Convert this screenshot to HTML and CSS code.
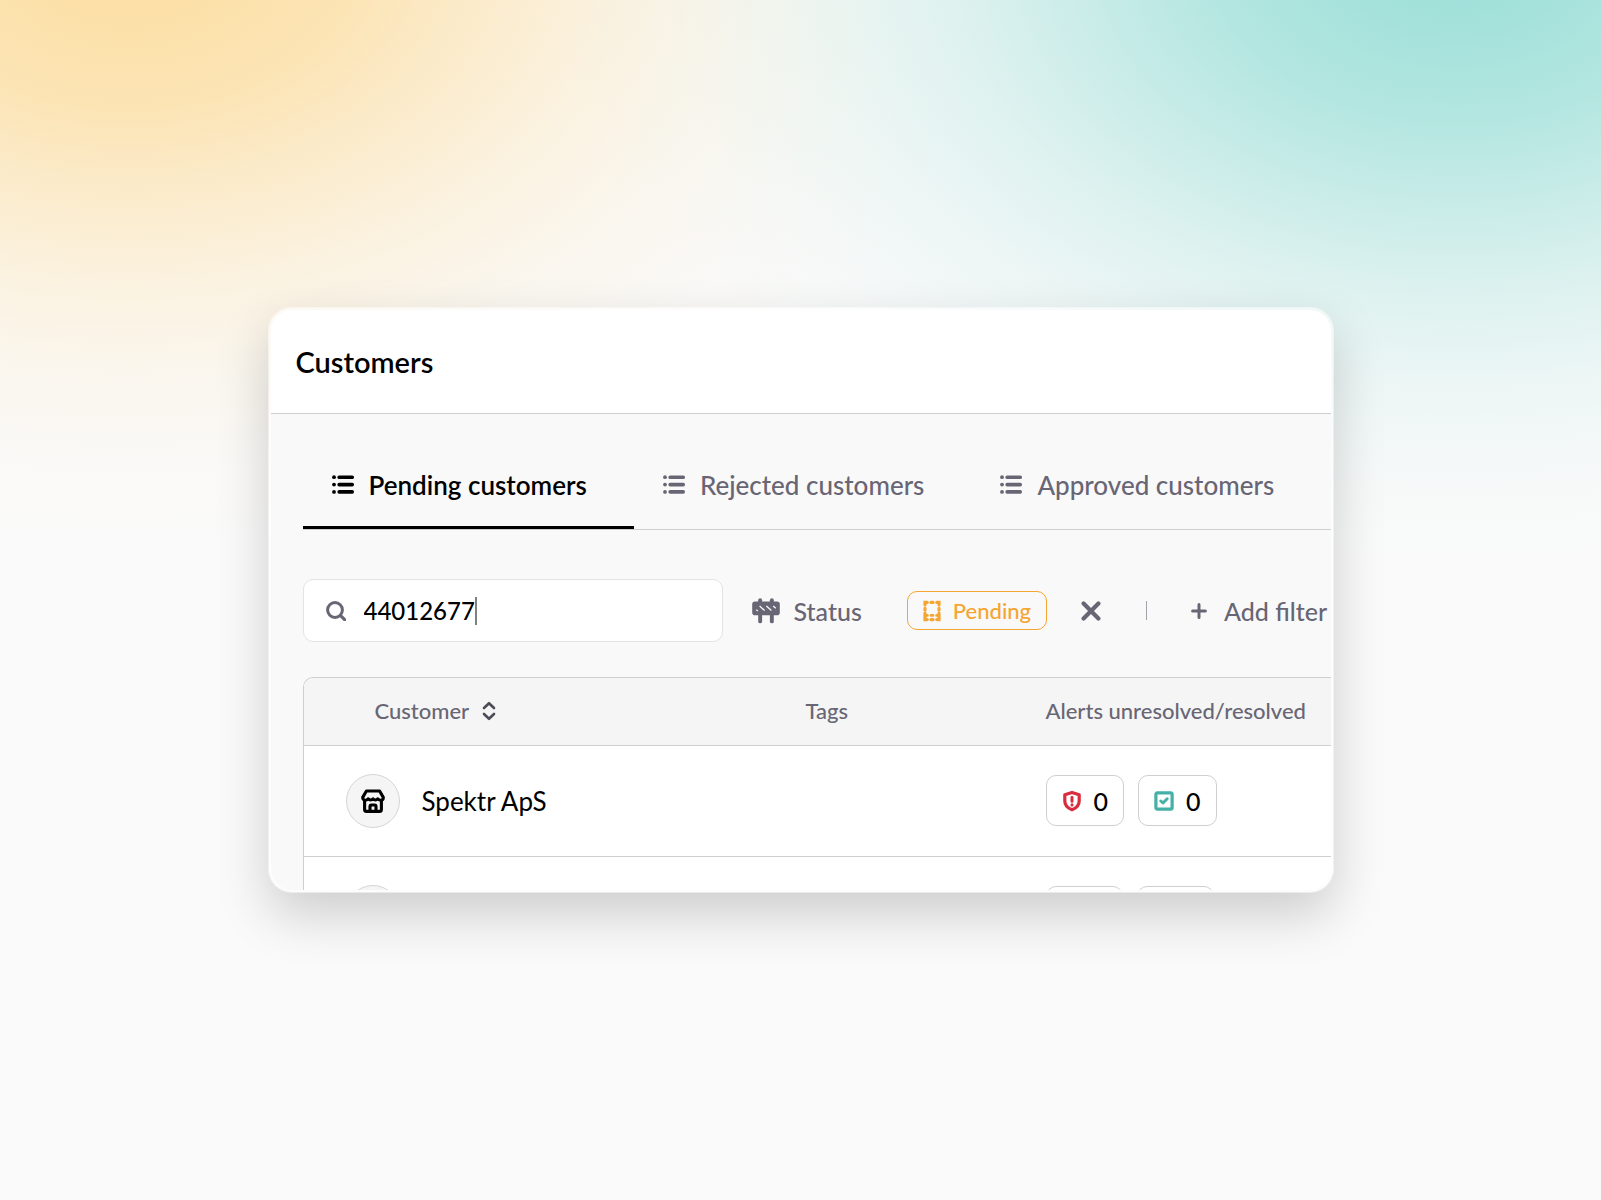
FILE: index.html
```html
<!DOCTYPE html>
<html lang="en">
<head>
    <meta charset="UTF-8">
    <meta name="viewport" content="width=device-width, initial-scale=1.0">
    <title>Customers</title>
    <link rel="stylesheet" href="styles.css">
</head>
<body>
    <!-- Shared icon shapes -->
    <svg class="sprite" aria-hidden="true">
        <symbol id="icon-list" viewBox="0 0 22 20">
            <g fill="currentColor">
                <circle cx="2" cy="2.2" r="1.9"/>
                <circle cx="2" cy="9.6" r="1.9"/>
                <circle cx="2" cy="16.9" r="1.9"/>
                <rect x="5.4" y="0.4" width="16.6" height="3.7" rx="1.7"/>
                <rect x="5.4" y="7.7" width="16.6" height="3.7" rx="1.7"/>
                <rect x="5.4" y="15" width="16.6" height="3.7" rx="1.7"/>
            </g>
        </symbol>
        <symbol id="icon-store" viewBox="0 0 24 24">
            <g fill="none" stroke="currentColor" stroke-width="3.1" stroke-linejoin="round" stroke-linecap="round">
                <path d="M5.4 2H18.6L22.3 8.4C22.3 10.2 21.2 11.2 19.6 11.2C18.3 11.2 17.3 10.6 16.8 9.8C16.2 10.6 15.4 11 14.4 11C13.4 11 12.5 10.6 12 9.8C11.5 10.6 10.6 11 9.6 11C8.6 11 7.8 10.6 7.2 9.8C6.7 10.6 5.7 11.2 4.4 11.2C2.8 11.2 1.7 10.2 1.7 8.4Z"/>
                <path d="M3.6 11.5V20.4Q3.6 22.4 5.6 22.4H18.4Q20.4 22.4 20.4 20.4V11.5"/>
                <path d="M9 22V17.4Q9 16 10.4 16H13.6Q15 16 15 17.4V22"/>
            </g>
        </symbol>
        <symbol id="icon-shield" viewBox="0 0 20 22">
            <path d="M10 2.4L17.2 4.8V11C17.2 15.4 13.6 18.4 10 19.8C6.4 18.4 2.8 15.4 2.8 11V4.8Z" fill="none" stroke="currentColor" stroke-width="3.2" stroke-linejoin="round"/>
            <path d="M10 7.2V11.2M10 14.8V14.9" stroke="currentColor" stroke-width="3" stroke-linecap="round"/>
        </symbol>
        <symbol id="icon-check" viewBox="0 0 20 20">
            <rect x="1.9" y="1.9" width="16.2" height="16.2" rx="1.4" fill="none" stroke="currentColor" stroke-width="3.2"/>
            <path d="M6.8 10L9 12L13.2 7.8" fill="none" stroke="currentColor" stroke-width="3" stroke-linecap="round" stroke-linejoin="round"/>
        </symbol>
    </svg>

    <main class="card">
        <header class="card-header">
            <h1>Customers</h1>
        </header>

        <div class="card-body">
            <nav class="tabs">
                <a href="#pending" class="tab active">
                    <svg class="icon-list"><use href="#icon-list"/></svg>
                    Pending customers
                </a>
                <a href="#rejected" class="tab">
                    <svg class="icon-list"><use href="#icon-list"/></svg>
                    Rejected customers
                </a>
                <a href="#approved" class="tab">
                    <svg class="icon-list"><use href="#icon-list"/></svg>
                    Approved customers
                </a>
            </nav>

            <div class="filters">
                <label class="search">
                    <svg class="icon-search" viewBox="0 0 20 20">
                        <circle cx="9" cy="9" r="7.4" fill="none" stroke="currentColor" stroke-width="3"/>
                        <path d="M14.6 14.6L18.6 18.6" stroke="currentColor" stroke-width="3.2" stroke-linecap="round"/>
                    </svg>
                    <span class="search-field">
                        <input type="text" value="44012677" aria-label="Search customers">
                        <span class="caret"></span>
                    </span>
                </label>

                <span class="status">
                    <svg class="icon-barrier" viewBox="0 0 28 26">
                        <g fill="currentColor">
                            <rect x="6.2" y="0.3" width="3.9" height="25" rx="1.9"/>
                            <rect x="17.9" y="0.3" width="3.9" height="25" rx="1.9"/>
                            <rect x="0.2" y="3.6" width="27.6" height="13.6" rx="2.8"/>
                        </g>
                        <path d="M4.3 11.8L5.8 13M7.6 8L12.6 12.6M14.4 8L19.4 12.6M21.2 8L23.8 10.3" stroke="#f9f9f9" stroke-width="1.3"/>
                    </svg>
                    Status
                </span>

                <button type="button" class="pill">
                    <svg class="icon-pending" viewBox="0 0 18 22">
                        <g fill="none" stroke="currentColor" stroke-width="3.2" stroke-linecap="round">
                            <path d="M2 5V2.4H4.2M13.8 2.4H16V5M8 2.4H10M2 8.4V10M16 8.4V10M2 13.2V19.6H4.2M16 13.2V19.6H13.8M8 19.6H10"/>
                            <path d="M3 15.4H4.4M8 15.4H10M13.6 15.4H15" stroke-width="2.8"/>
                        </g>
                    </svg>
                    Pending
                </button>

                <button type="button" class="remove" aria-label="Remove filter">
                    <svg class="icon-close" viewBox="0 0 20 20">
                        <path d="M2.6 2.6L17.4 17.4M17.4 2.6L2.6 17.4" stroke="currentColor" stroke-width="4.2" stroke-linecap="round"/>
                    </svg>
                </button>

                <span class="divider"></span>

                <button type="button" class="add-filter">
                    <svg class="icon-plus" viewBox="0 0 16 16">
                        <path d="M8 1.6V14.4M1.6 8H14.4" stroke="currentColor" stroke-width="3" stroke-linecap="round"/>
                    </svg>
                    Add filter
                </button>
            </div>

            <div class="table-wrap">
                <table>
                    <thead>
                        <tr>
                            <th class="col-customer">
                                <div class="sortable">
                                    Customer
                                    <svg class="icon-sort" viewBox="0 0 14 20">
                                        <path d="M2 7L7 2.2L12 7M2 13L7 17.8L12 13" fill="none" stroke="#4c4c57" stroke-width="2.6" stroke-linecap="round" stroke-linejoin="round"/>
                                    </svg>
                                </div>
                            </th>
                            <th class="col-tags">Tags</th>
                            <th>Alerts unresolved/resolved</th>
                        </tr>
                    </thead>
                    <tbody>
                        <tr>
                            <td>
                                <div class="customer">
                                    <span class="avatar"><svg class="icon-store"><use href="#icon-store"/></svg></span>
                                    Spektr ApS
                                </div>
                            </td>
                            <td></td>
                            <td>
                                <div class="alerts">
                                    <span class="badge"><svg class="icon-shield"><use href="#icon-shield"/></svg>0</span>
                                    <span class="badge"><svg class="icon-check"><use href="#icon-check"/></svg>0</span>
                                </div>
                            </td>
                        </tr>
                        <tr>
                            <td>
                                <div class="customer">
                                    <span class="avatar"></span>
                                </div>
                            </td>
                            <td></td>
                            <td>
                                <div class="alerts">
                                    <span class="badge"><svg class="icon-shield"><use href="#icon-shield"/></svg></span>
                                    <span class="badge"><svg class="icon-check"><use href="#icon-check"/></svg></span>
                                </div>
                            </td>
                        </tr>
                    </tbody>
                </table>
            </div>
        </div>
    </main>
</body>
</html>
```
FILE: styles.css
```css
* {
    box-sizing: border-box;
}
body {
    margin: 0;
    min-height: 100vh;
    display: flex;
    align-items: center;
    justify-content: center;
    font-family: Lato, 'Open Sans', sans-serif;
    font-size: 25px;
    line-height: 30px;
    color: #000;
    background-color: #fafafa;
    background-image:
        radial-gradient(ellipse 57% 52% at 91% -4%, rgba(159,224,217,1) 0%, rgba(159,224,217,0.96) 10%, rgba(159,224,217,0.79) 26%, rgba(159,224,217,0.54) 41%, rgba(159,224,217,0.3) 56%, rgba(159,224,217,0.13) 72%, rgba(159,224,217,0.03) 87%, rgba(159,224,217,0) 100%),
        radial-gradient(ellipse 55% 50% at 8% -4%, rgba(252,223,165,1) 0%, rgba(252,223,165,0.97) 10%, rgba(252,223,165,0.82) 26%, rgba(252,223,165,0.52) 42%, rgba(252,223,165,0.3) 56%, rgba(252,223,165,0.13) 72%, rgba(252,223,165,0.03) 87%, rgba(252,223,165,0) 100%);
}
svg {
    display: block;
    flex: none;
}
button {
    font: inherit;
    color: inherit;
    background: none;
    border: none;
    padding: 0;
    cursor: pointer;
}
.sprite {
    position: absolute;
    width: 0;
    height: 0;
}
.card {
    width: 90%;
    max-width: 1066px;
    aspect-ratio: 1066 / 586;
    overflow: hidden;
    border: 3px solid rgba(255,255,255,0.5);
    border-radius: 24px;
    background-color: #f9f9f9;
    background-clip: padding-box;
    box-shadow: 0 22px 52px rgba(0,0,0,0.18);
}
.card-header {
    background-color: #fff;
    border-bottom: 1px solid #cfcfd1;
    padding: 34px 25px;
}
h1 {
    margin: 0;
    font-size: 29px;
    line-height: 35px;
    font-weight: 600;
}
.card-body {
    padding: 32px 0 0 32px;
}
.tabs {
    display: flex;
    border-bottom: 1px solid #cfcfd1;
}
.tab {
    display: flex;
    align-items: center;
    gap: 15px;
    padding: 24px 47px 26px 29px;
    border-bottom: 3px solid transparent;
    color: #686674;
    font-size: 26px;
    font-weight: 500;
    text-decoration: none;
    white-space: nowrap;
}
.tab.active {
    color: #000;
    font-weight: 600;
    border-bottom-color: #000;
}
.icon-list {
    width: 22px;
    height: 20px;
}
.filters {
    display: flex;
    align-items: center;
    margin-top: 49px;
    color: #686674;
    font-weight: 500;
    white-space: nowrap;
}
.search {
    flex: none;
    display: flex;
    align-items: center;
    gap: 18px;
    width: 420px;
    height: 63px;
    padding: 0 22px;
    background-color: #fff;
    border: 1px solid #e3e3e5;
    border-radius: 10px;
}
.icon-search {
    width: 20px;
    height: 20px;
}
.search-field {
    display: flex;
    align-items: center;
    min-width: 0;
}
.search input {
    field-sizing: content;
    border: none;
    outline: none;
    padding: 0;
    background: none;
    font: inherit;
    font-size: 24px;
    color: #000;
}
.caret {
    width: 2px;
    height: 28px;
    background-color: #808080;
}
.status {
    display: flex;
    align-items: center;
    gap: 14px;
    margin-left: 29px;
}
.icon-barrier {
    width: 28px;
    height: 26px;
}
.pill {
    display: flex;
    align-items: center;
    gap: 12px;
    height: 39px;
    margin-left: 45px;
    padding: 0 15px;
    border: 1px solid #f5a531;
    border-radius: 10px;
    color: #f5a531;
    font-size: 22px;
}
.icon-pending {
    width: 18px;
    height: 22px;
}
.remove {
    margin-left: 34px;
}
.icon-close {
    width: 20px;
    height: 20px;
}
.divider {
    width: 1px;
    height: 19px;
    margin-left: 45px;
    background-color: #a3a2aa;
}
.add-filter {
    display: flex;
    align-items: center;
    gap: 17px;
    margin-left: 44px;
}
.icon-plus {
    width: 16px;
    height: 16px;
}
.table-wrap {
    margin-top: 35px;
    border: 1px solid #cfcfd1;
    border-right: none;
    border-radius: 10px 0 0 0;
    background-color: #fff;
    overflow: hidden;
}
table {
    width: 100%;
    border-collapse: collapse;
    table-layout: fixed;
}
th {
    height: 67px;
    padding: 0;
    background-color: #f5f5f5;
    color: #686674;
    font-size: 22px;
    font-weight: 500;
    text-align: left;
    white-space: nowrap;
}
tr {
    border-bottom: 1px solid #cfcfd1;
}
.col-customer {
    width: 502px;
    padding-left: 71px;
}
.col-tags {
    width: 240px;
}
.sortable {
    display: flex;
    align-items: center;
    gap: 13px;
}
.icon-sort {
    width: 14px;
    height: 20px;
}
td {
    height: 111px;
    padding: 0;
}
.customer {
    display: flex;
    align-items: center;
    gap: 22px;
    padding-left: 42px;
    font-size: 26px;
}
.avatar {
    display: flex;
    align-items: center;
    justify-content: center;
    width: 54px;
    height: 54px;
    border: 1px solid #d5d5d7;
    border-radius: 50%;
    background-color: #f5f5f5;
}
.icon-store {
    width: 24px;
    height: 24px;
}
.alerts {
    display: flex;
    gap: 14px;
}
.badge {
    display: flex;
    align-items: center;
    gap: 12px;
    min-width: 77px;
    height: 51px;
    padding: 0 15px;
    border: 1px solid #cfcfd1;
    border-radius: 10px;
    font-weight: 500;
}
.icon-shield {
    width: 20px;
    height: 22px;
    color: #d92d3f;
}
.icon-check {
    width: 20px;
    height: 20px;
    color: #44b0a6;
}
```
